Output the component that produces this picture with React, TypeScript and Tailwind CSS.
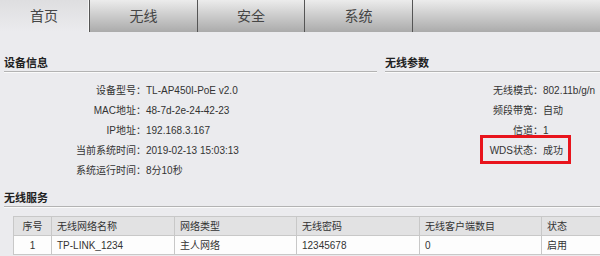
import React from 'react';

const leftRows = [
    ['设备型号：', 'TL-AP450I-PoE v2.0'],
    ['MAC地址：', '48-7d-2e-24-42-23'],
    ['IP地址：', '192.168.3.167'],
    ['当前系统时间：', '2019-02-13 15:03:13'],
    ['系统运行时间：', '8分10秒'],
];

const rightRows = [
    ['无线模式：', '802.11b/g/n'],
    ['频段带宽：', '自动'],
    ['信道：', '1'],
];

const cols = ['序号', '无线网络名称', '网络类型', '无线密码', '无线客户端数目', '状态'];
const cells = ['1', 'TP-LINK_1234', '主人网络', '12345678', '0', '启用'];

const App: React.FC = () => {
    return (
        <div className="w-[600px] h-[256px] overflow-hidden bg-[#ebebee] text-[#333] font-['Liberation_Sans','Noto_Sans_CJK_SC',sans-serif]">
            {/* tabs */}
            <div className="flex h-[32px] text-[14px] text-[#454545]">
                <div className="w-[89px] flex items-center justify-center bg-linear-to-b from-[#dedee0] to-[#ebebee] border-r border-[#f6f6f6]">首页</div>
                <div className="w-[108px] flex items-center justify-center bg-linear-to-b from-[#ececec] to-[#ababab] border-l border-[#555]">无线</div>
                <div className="w-[107px] flex items-center justify-center bg-linear-to-b from-[#ececec] to-[#ababab] border-l border-[#555]">安全</div>
                <div className="w-[108px] flex items-center justify-center bg-linear-to-b from-[#ececec] to-[#ababab] border-l border-[#555]">系统</div>
                <div className="flex-1 bg-linear-to-b from-[#ececec] to-[#ababab] border-l border-[#555]"></div>
            </div>

            {/* info panels */}
            <div className="flex mt-[23px] text-[10px]">
                <div className="ml-[4px] w-[373px]">
                    <div className="text-[11px] font-bold text-[#222] leading-[16px] border-b border-[#b3b3b3] shadow-[0_1px_0_#fafafa]">设备信息</div>
                    <div className="mt-[8px]">
                        {leftRows.map(([k, v]) => (
                            <div key={k} className="flex h-[20px] items-center">
                                <span className="w-[142px] text-right">{k}</span>
                                <span>{v}</span>
                            </div>
                        ))}
                    </div>
                </div>
                <div className="ml-[8px] flex-1">
                    <div className="text-[11px] font-bold text-[#222] leading-[16px] border-b border-[#b3b3b3] shadow-[0_1px_0_#fafafa]">无线参数</div>
                    <div className="mt-[8px]">
                        {rightRows.map(([k, v]) => (
                            <div key={k} className="flex h-[20px] items-center">
                                <span className="w-[158px] text-right">{k}</span>
                                <span>{v}</span>
                            </div>
                        ))}
                        <div className="relative flex h-[20px] items-center">
                            <span className="w-[158px] text-right">WDS状态：</span>
                            <span>成功</span>
                            <div className="absolute left-[95px] top-[-5px] w-[91px] h-[29px] border-[3px] border-[#e8141c]"></div>
                        </div>
                    </div>
                </div>
            </div>

            {/* wireless service */}
            <div className="ml-[4px] mt-[10px] text-[11px] font-bold text-[#222] leading-[16px] border-b border-[#b3b3b3] shadow-[0_1px_0_#fafafa]">无线服务</div>
            <div className="ml-[13px] mt-[9px] w-[620px] text-[10px] border-l border-t border-[#c8c8c8]">
                <div className="grid grid-cols-[38px_123px_122px_123px_122px_1fr] bg-[#e2e2e3]">
                    {cols.map((c, i) => (
                        <div key={c} className={i === 0 ? 'h-[19px] flex items-center justify-center border-r border-b border-[#c8c8c8]' : 'h-[19px] flex items-center pl-[5px] border-r border-b border-[#c8c8c8]'}>{c}</div>
                    ))}
                </div>
                <div className="grid grid-cols-[38px_123px_122px_123px_122px_1fr] bg-[#fdfdfd]">
                    {cells.map((c, i) => (
                        <div key={i} className={i === 0 ? 'h-[19px] flex items-center justify-center border-r border-b border-[#c8c8c8]' : 'h-[19px] flex items-center pl-[5px] border-r border-b border-[#c8c8c8]'}>{c}</div>
                    ))}
                </div>
            </div>
        </div>
    );
};

export default App;
